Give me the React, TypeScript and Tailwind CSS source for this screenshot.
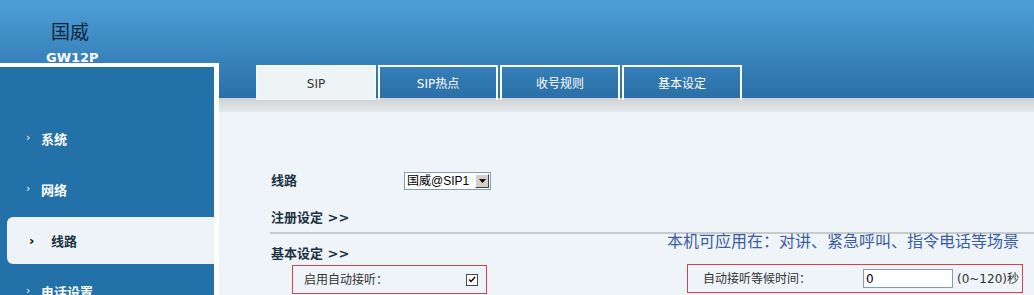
export default function App() {

    const menu = [
        { name: "系统", active: false },
        { name: "网络", active: false },
        { name: "线路", active: true },
        { name: "电话设置", active: false },
    ];

    const tabs = ["SIP", "SIP热点", "收号规则", "基本设定"];

    const cjk = "font-['DejaVu_Sans','Noto_Sans_CJK_SC',sans-serif]";

    return (

        <div className={`relative flex h-[295px] w-full overflow-hidden bg-[linear-gradient(to_bottom,#4e9fd9_0px,#2a6fa8_98px,#cdd1d3_98px,#e4e8ea_112px,#eef4f8_112px)] ${cjk}`}>

            {/* left column */}
            <div className="flex w-[219px] shrink-0 flex-col">

                <div className="h-[63px] shrink-0 overflow-hidden pl-[51px] pt-[20px]">
                    <div className="text-[19px] leading-[22px] text-[#0f2639] font-['Noto_Sans_CJK_SC',sans-serif]">
                        国威
                    </div>
                    <div className="-ml-[5px] mt-[8px] text-[13px] font-bold leading-[16px] text-white">
                        GW12P
                    </div>
                </div>

                <div className="flex min-h-0 flex-1 flex-col gap-[4px] overflow-hidden border-t-4 border-r-[5px] border-white bg-[#2371a9] pt-[48px]">
                    {menu.map((m) => (
                        m.active ? (
                            <div
                                key={m.name}
                                className="ml-[7px] flex h-[47px] shrink-0 items-center rounded-l-[6px] bg-[#eef3f7] pl-[22px]"
                            >
                                <span className="w-[22px] text-[13px] font-bold text-black">›</span>
                                <span className="text-[13px] font-bold text-[#1d3344] font-['Noto_Sans_CJK_SC',sans-serif]">
                                    {m.name}
                                </span>
                            </div>
                        ) : (
                            <div
                                key={m.name}
                                className="flex h-[47px] shrink-0 items-center pl-[26px]"
                            >
                                <span className="w-[15px] text-[11px] text-white">›</span>
                                <span className="text-[13px] font-bold text-white font-['Noto_Sans_CJK_SC',sans-serif]">
                                    {m.name}
                                </span>
                            </div>
                        )
                    ))}
                </div>

            </div>

            {/* right column */}
            <div className="flex flex-1 flex-col">

                <div className="flex gap-[2px] pl-[37px] pt-[65px]">
                    {tabs.map((t, i) => (
                        <div
                            key={t}
                            className={
                                i === 0
                                    ? "flex h-[35px] w-[120px] items-center justify-center border-2 border-b-0 border-[#f4f7f9] bg-[#eef3f6] text-[12px] text-[#333]"
                                    : "flex h-[35px] w-[120px] items-center justify-center border-2 border-b-0 border-white text-[12px] text-white"
                            }
                        >
                            {t}
                        </div>
                    ))}
                </div>

                <div className="flex flex-col pl-[52px] pt-[72px]">

                    <div className="flex h-[18px] items-center">
                        <span className="w-[133px] text-[13px] font-bold text-[#1d3344]">线路</span>
                        <div className="flex h-[18px] w-[87px] items-center border border-[#7f9db9] bg-white pl-[2px]">
                            <span className="flex-1 text-[12px] leading-none text-black font-['Liberation_Sans','Noto_Sans_CJK_SC',sans-serif]">
                                国威@SIP1
                            </span>
                            <div className="m-[1px] flex h-[14px] w-[14px] items-center justify-center border border-t-white border-l-white border-r-[#404040] border-b-[#404040] bg-[#d4d0c8]">
                                <svg width="7" height="4" viewBox="0 0 7 4">
                                    <path d="M0 0 L7 0 L3.5 4 Z" fill="#000" />
                                </svg>
                            </div>
                        </div>
                    </div>

                    <div className="mt-[20px] text-[13px] font-bold leading-[16px] text-[#1d3344]">
                        注册设定 &gt;&gt;
                    </div>

                    <div className="-ml-[1px] mt-[6px] h-[2px] bg-[#c6cbce]" />

                    <div className="mt-[12px] text-[13px] font-bold leading-[16px] text-[#1d3344]">
                        基本设定 &gt;&gt;
                    </div>

                    <div className="mt-[3px] flex items-start">

                        <div className="ml-[21px] flex h-[29px] w-[195px] items-center justify-between border border-[#d2434f] pl-[11px] pr-[8px]">
                            <span className="text-[12px] text-[#333]">启用自动接听：</span>
                            <div className="flex h-[12px] w-[12px] items-center justify-center border border-[#4a4a4a] bg-white">
                                <svg width="8" height="7" viewBox="0 0 8 7">
                                    <path d="M1 3.5 L3 5.5 L7 1" fill="none" stroke="#000" strokeWidth="1.3" />
                                </svg>
                            </div>
                        </div>

                        <div className="-mt-[1px] ml-[200px] flex h-[29px] w-[336px] items-center border border-[#d2434f] pl-[15px]">
                            <span className="w-[160px] text-[12px] text-[#333]">自动接听等候时间：</span>
                            <div className="flex h-[19px] w-[90px] items-center border border-[#7f9db9] bg-white pl-[2px] text-[12px] text-black">
                                0
                            </div>
                            <span className="ml-[4px] text-[12px] text-[#333]">(0~120)秒</span>
                        </div>

                    </div>

                </div>

            </div>

            {/* hint text */}
            <div className="absolute left-[667px] top-[230px] text-[16px] leading-[20px] text-[#3c5ca6] font-['Noto_Sans_CJK_SC',sans-serif]">
                本机可应用在：对讲、紧急呼叫、指令电话等场景
            </div>

        </div>

    );
}
